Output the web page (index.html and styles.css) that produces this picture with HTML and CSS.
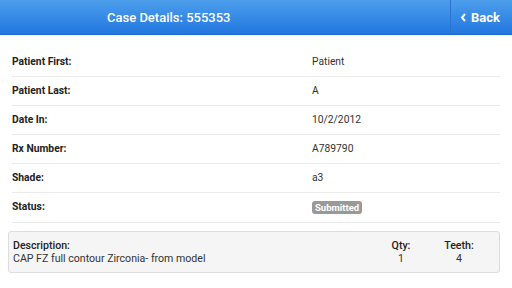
FILE: index.html
```html
<!DOCTYPE html>
<html lang="en">
<head>
    <meta charset="UTF-8">
    <meta name="viewport" content="width=device-width, initial-scale=1.0">
    <title>Case Details</title>
    <link rel="stylesheet" href="styles.css">
</head>
<body>
    <div class="header">
        <h1 class="title">Case Details: 555353</h1>
        <a class="back" href="#">
            <svg class="chev" width="7" height="9" viewBox="0 0 7 9"><path d="M5 1 L2 4.5 L5 8" fill="none" stroke="#fff" stroke-width="2"/></svg>
            Back
        </a>
    </div>
    <div class="content">
        <div class="row"><span class="label">Patient First:</span><span class="value">Patient</span></div>
        <div class="row"><span class="label">Patient Last:</span><span class="value">A</span></div>
        <div class="row"><span class="label">Date In:</span><span class="value">10/2/2012</span></div>
        <div class="row"><span class="label">Rx Number:</span><span class="value">A789790</span></div>
        <div class="row"><span class="label">Shade:</span><span class="value">a3</span></div>
        <div class="row"><span class="label">Status:</span><span class="value"><span class="badge">Submitted</span></span></div>

        <div class="item">
            <div class="desc">
                <div class="item-label">Description:</div>
                <div>CAP FZ full contour Zirconia- from model</div>
            </div>
            <div class="num qty">
                <div class="item-label">Qty:</div>
                <div>1</div>
            </div>
            <div class="num teeth">
                <div class="item-label">Teeth:</div>
                <div>4</div>
            </div>
        </div>
    </div>
</body>
</html>
```

FILE: styles.css
```css
body {
    margin: 0;
    font-family: Roboto, "Liberation Sans", sans-serif;
    background: #fff;
    color: #333;
}
.header {
    display: flex;
    height: 34px;
    background: linear-gradient(#4c9eea, #2277e0);
    border-bottom: 1px solid #1a68cc;
    color: #fff;
}
.title {
    flex: 1;
    margin: 0;
    padding-left: 107px;
    font-size: 13px;
    font-weight: 500;
    line-height: 35px;
}
.back {
    display: flex;
    align-items: center;
    gap: 4px;
    width: 52px;
    padding-left: 9px;
    border-left: 1px solid #2a74d0;
    color: #fff;
    font-size: 13px;
    font-weight: bold;
    text-decoration: none;
}
.content {
    padding: 13px 12px 0 12px;
}
.row {
    display: grid;
    grid-template-columns: 300px 1fr;
    padding: 8px 0;
    border-bottom: 1px solid #ececec;
    font-size: 10.3px;
    line-height: 12px;
}
.label {
    font-weight: bold;
    color: #222;
}
.badge {
    display: inline-block;
    padding: 0 3px;
    background: #999;
    color: #fff;
    font-size: 9.5px;
    font-weight: bold;
    border-radius: 3px;
    line-height: 13px;
}
.item {
    display: flex;
    margin: 8px 0 0 -4px;
    padding: 7px 20px 7px 4px;
    background: #f5f5f5;
    border: 1px solid #ddd;
    border-radius: 3px;
    font-size: 10.6px;
    line-height: 13px;
}
.item-label {
    font-weight: 500;
    color: #222;
}
.desc {
    flex: 1;
}
.num {
    text-align: center;
}
.qty {
    width: 30px;
}
.teeth {
    width: 40px;
    margin-left: 23px;
}
```
